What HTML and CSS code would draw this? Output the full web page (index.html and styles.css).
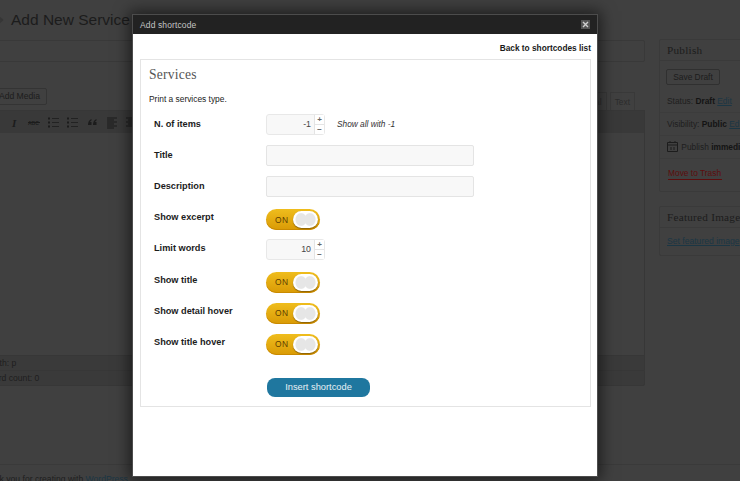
FILE: index.html
```html
<!DOCTYPE html>
<html lang="en">
<head>
<meta charset="utf-8">
<title>Add shortcode</title>
<link rel="stylesheet" href="styles.css">
</head>
<body>
<div class="page">
  <div class="columns">
    <div class="main">
      <div class="title-row"><span class="title-arrow"></span><h1 class="page-title">Add New Service</h1></div>
      <div class="title-input"></div>
      <div class="media-row">
        <span class="media-btn">Add Media</span>
        <div class="tabs"><span class="tab">Visual</span><span class="tab">Text</span></div>
      </div>
      <div class="toolbar">
        <svg class="tool-icons" width="160" height="23" viewBox="0 0 160 23">
          <text x="31" y="16" class="tool-i">I</text>
          <text x="47" y="14" class="tool-abc">ABC</text>
          <path d="M47 11.500h12" stroke="#1c1c1c" stroke-width="1"/>
          <path d="M67 6.500h2v2h-2zM67 10.500h2v2h-2zM67 14.500h2v2h-2z" fill="#1c1c1c"/>
          <path d="M71 7.500h7M71 11.500h7M71 15.500h7" stroke="#222" stroke-width="1"/>
          <path d="M86 6.500h2v2h-2zM86 10.500h2v2h-2zM86 14.500h2v2h-2z" fill="#1c1c1c"/>
          <path d="M90 7.500h7M90 11.500h7M90 15.500h7" stroke="#222" stroke-width="1"/>
          <path d="M107 14c0-3 1-5 3.500-6v1.500c-1 .5-1.500 1-1.500 1.500h1.500v3zM112 14c0-3 1-5 3.500-6v1.500c-1 .5-1.500 1-1.500 1.500h1.500v3z" fill="#1c1c1c"/>
          <path d="M126 7h10M126 9h7M126 11h10M126 13h7M126 15h10M126 17h7" stroke="#1c1c1c" stroke-width="1"/>
          <path d="M145 7h10M147 9h6M145 11h10M147 13h6M145 15h10" stroke="#1c1c1c" stroke-width="1"/>
        </svg>
      </div>
      <div class="editor"></div>
      <div class="status-row path">Path: p</div>
      <div class="status-row words">Word count: 0</div>
    </div>
    <aside class="side">
      <section class="box publish">
        <h2 class="box-head">Publish</h2>
        <div class="save-row"><span class="save-btn">Save Draft</span></div>
        <p class="pub-line">Status: <b>Draft</b> <a class="link">Edit</a></p>
        <p class="pub-line">Visibility: <b>Public</b> <a class="link">Edit</a></p>
        <p class="pub-line">
          <svg class="cal" width="11" height="12" viewBox="0 0 11 12"><path d="M.5 2.500h10v9H.5zM.5 5h10M3 1v2M8 1v2M4 7v3M7 7v3" stroke="#1c1c1c" fill="none"/></svg>
          Publish <b>immediately</b>
        </p>
        <p class="trash-row"><a class="trash">Move to Trash</a></p>
      </section>
      <section class="box featured">
        <h2 class="box-head">Featured Image</h2>
        <p class="feat-line"><a class="link">Set featured image</a></p>
      </section>
    </aside>
  </div>
  <footer class="foot">Thank you for creating with <a class="link">WordPress</a></footer>

  <div class="modal">
    <div class="modal-head">
      <span class="modal-title">Add shortcode</span>
      <span class="modal-close">
        <svg width="7" height="7" viewBox="0 0 7 7"><path d="M1 1l5 5M6 1l-5 5" stroke="#d0d0d0" stroke-width="1.400"/></svg>
      </span>
    </div>
    <div class="back-row"><a class="back">Back to shortcodes list</a></div>
    <div class="panel">
      <h2 class="panel-title">Services</h2>
      <p class="panel-desc">Print a services type.</p>
      <div class="row">
        <label class="label">N. of items</label>
        <div class="spin">
          <span class="spin-value">-1</span>
          <span class="spin-btns"><span class="spin-btn">+</span><span class="spin-btn">−</span></span>
        </div>
        <em class="hint">Show all with -1</em>
      </div>
      <div class="row"><label class="label">Title</label><div class="text-input"></div></div>
      <div class="row"><label class="label">Description</label><div class="text-input"></div></div>
      <div class="row"><label class="label">Show excerpt</label><div class="toggle"><span class="toggle-on">ON</span><span class="knob"></span></div></div>
      <div class="row">
        <label class="label">Limit words</label>
        <div class="spin">
          <span class="spin-value">10</span>
          <span class="spin-btns"><span class="spin-btn">+</span><span class="spin-btn">−</span></span>
        </div>
      </div>
      <div class="row"><label class="label">Show title</label><div class="toggle"><span class="toggle-on">ON</span><span class="knob"></span></div></div>
      <div class="row"><label class="label">Show detail hover</label><div class="toggle"><span class="toggle-on">ON</span><span class="knob"></span></div></div>
      <div class="row"><label class="label">Show title hover</label><div class="toggle"><span class="toggle-on">ON</span><span class="knob"></span></div></div>
      <div class="submit-row"><span class="insert">Insert shortcode</span></div>
    </div>
  </div>
</div>
</body>
</html>
```

FILE: styles.css
```css
* { box-sizing: border-box; }
html, body { margin: 0; padding: 0; }
body { font-family: "Liberation Sans", Arial, sans-serif; background: #3f3f3f; }
h1, h2, p { margin: 0; font-weight: normal; }

.page {
  position: relative;
  width: 740px;
  height: 481px;
  overflow: hidden;
  background: #404040;
  color: #1e1e1e;
  font-size: 8.4px;
}

.columns { display: flex; height: 464px; }
.main { width: 665px; margin-left: -20px; flex: none; }
.side { width: 120px; margin-left: 14px; flex: none; padding-top: 39px; }

.title-row { height: 40px; display: flex; align-items: center; padding-left: 31px; }
.title-arrow {
  width: 6px; height: 6px; margin-left: -15px; margin-right: 9px;
  border-top: 2px solid #363636; border-right: 2px solid #363636;
  transform: rotate(45deg);
}
.page-title { font-size: 15.5px; color: #1c1c1c; margin-top: -1px; }

.title-input { height: 22px; border: 1px solid #393939; border-radius: 2px; }

.media-row { height: 48px; display: flex; justify-content: space-between; align-items: flex-end; }
.media-btn {
  margin-bottom: 5px; width: 67px; height: 17px; border: 1px solid #343434; border-radius: 2px;
  text-align: right; padding-right: 6px; line-height: 15px; color: #1c1c1c; font-size: 8.6px;
}
.tabs { display: flex; gap: 3px; margin-right: 10px; }
.tab { height: 18px; border: 1px solid #393939; border-bottom: 0; padding: 0 4px; line-height: 18px; color: #2c2c2c; }

.toolbar { height: 23px; background: #393939; border: 1px solid #373737; border-bottom: 0; display: flex; }
.tool-icons { flex: none; display: block; }
.tool-i { font-family: "Liberation Serif", serif; font-style: italic; font-weight: bold; font-size: 11px; fill: #1c1c1c; }
.tool-abc { font-family: "Liberation Sans", sans-serif; font-weight: bold; font-size: 5px; fill: #1c1c1c; }

.editor { height: 222px; border-left: 1px solid #373737; border-right: 1px solid #373737; }
.status-row { height: 15px; line-height: 15px; background: #3a3a3a; border: 1px solid #373737; border-bottom: 0; }
.path { padding-left: 8px; font-size: 8.6px; }
.words { border-bottom: 1px solid #373737; height: 16px; border-radius: 0 0 2px 2px; padding-left: 5px; font-size: 8.6px; }

.box { border: 1px solid #3a3a3a; border-radius: 2px; }
.publish { height: 153px; }
.featured { height: 50px; margin-top: 14px; }
.box-head {
  height: 21px; padding-left: 7px; line-height: 21px;
  font-family: "Liberation Serif", serif; font-size: 11.2px; letter-spacing: .25px;
  color: #1c1c1c; border-bottom: 1px solid #3a3a3a; white-space: nowrap;
}
.save-row { padding: 8px 0 0 6px; height: 29px; }
.save-btn { display: block; width: 54px; height: 16px; border: 1px solid #303030; border-radius: 2px; text-align: center; line-height: 14px; color: #1c1c1c; }
.pub-line { height: 23px; padding-left: 7px; line-height: 23px; white-space: nowrap; border-bottom: 1px solid #3c3c3c; }
.pub-line b { color: #141414; }
.cal { vertical-align: -2px; margin-right: 1px; }
.link { color: #1b3644; text-decoration: underline; }
.trash-row { padding: 9px 0 0 8px; }
.trash { color: #5d0d0d; border-bottom: 1px solid #5d0d0d; padding: 0 1px 1px 0; }
.feat-line { padding: 8px 0 0 7px; white-space: nowrap; font-size: 8.6px; }

.foot { height: 17px; border-top: 1px solid #3a3a3a; padding-top: 8px; margin-left: -20px; line-height: 12px; font-size: 8.6px; white-space: nowrap; }

.modal {
  position: absolute;
  left: 132px; top: 14px;
  width: 466px; height: 463px;
  border: 1px solid #4c4c4c;
  background: #fff;
  box-shadow: 0 0 14px 3px rgba(0, 0, 0, .55);
}
.modal-head {
  height: 19px; background: #222; display: flex; justify-content: space-between; align-items: center;
  padding: 0 7px;
}
.modal-title { color: #c4c4c4; font-size: 8.5px; letter-spacing: .12px; }
.modal-close { width: 9px; height: 9px; background: #555; display: flex; align-items: center; justify-content: center; }
.back-row { height: 25px; padding: 8px 6px 0 0; text-align: right; line-height: 12px; }
.back { font-weight: bold; font-size: 8.3px; color: #1a1a1a; }

.panel { margin: 0 6px 0 7px; height: 348px; border: 1px solid #e4e4e4; padding: 0 8px; color: #222; }
.panel-title { height: 30px; line-height: 30px; font-family: "Liberation Serif", serif; font-size: 13.6px; letter-spacing: .2px; color: #555; }
.panel-desc { height: 18px; line-height: 18px; font-size: 8.4px; color: #222; }

.row { height: 31.2px; display: flex; align-items: center; padding-left: 5px; }
.label { width: 112px; flex: none; font-weight: bold; font-size: 9.2px; color: #1c1c1c; }

.spin {
  width: 59px; height: 21px; margin-top: 2px; display: flex;
  border: 1px solid #e8e8e8; border-radius: 3px; background: #f8f8f8;
}
.spin-value { flex: 1; text-align: right; padding-right: 3px; line-height: 19px; font-size: 8.8px; color: #444; }
.spin-btns { width: 10px; flex: none; background: #fff; border-left: 1px solid #e4e4e4; display: flex; flex-direction: column; }
.spin-btn { height: 10px; line-height: 9px; text-align: center; font-size: 8px; font-weight: bold; color: #666; }
.spin-btn + .spin-btn { border-top: 1px solid #e4e4e4; }
.hint { margin: 0 0 0 12px; font-size: 8.3px; color: #333; }

.text-input { width: 208px; height: 21px; margin-top: 2px; border: 1px solid #e4e4e4; border-radius: 2px; background: #f8f8f8; }

.toggle {
  width: 54px; height: 21px; margin-top: 5px; position: relative; display: flex; align-items: center;
  border-radius: 11px; background: linear-gradient(#efbd1d, #d99a05);
  box-shadow: inset 0 -1px 0 #c98a00;
}
.toggle-on { margin-left: 9px; font-size: 8.4px; letter-spacing: .4px; color: #5c3d00; }
.knob {
  position: absolute; right: 2px; top: 2px; width: 25px; height: 17px; border-radius: 9px;
  background: radial-gradient(ellipse 6px 7px at 32% 50%, #e6e6e6 0 5px, transparent 6px), radial-gradient(ellipse 6px 7px at 68% 50%, #e6e6e6 0 5px, transparent 6px), #fff;
  box-shadow: 0 1px 1px rgba(90, 60, 0, .6);
}

.submit-row { padding: 20.4px 0 0 118px; }
.insert {
  display: block; width: 103px; height: 19px; border-radius: 8px; background: #1f779f;
  color: #e8f0f4; font-size: 9.3px; line-height: 19px; text-align: center;
}
```
